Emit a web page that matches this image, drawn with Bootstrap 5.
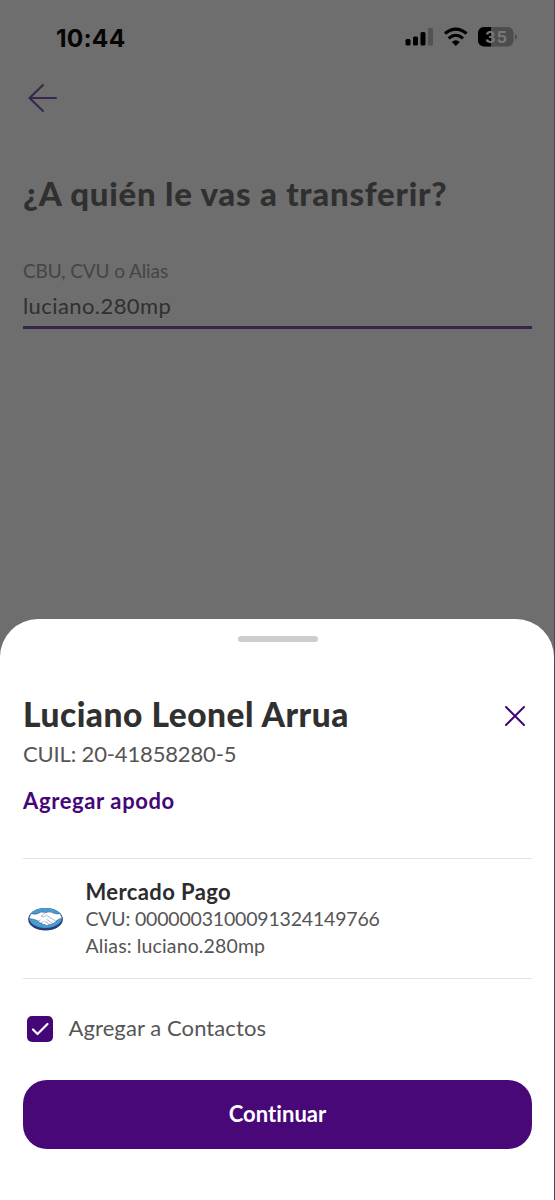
<!DOCTYPE html>
<html lang="es">
<head>
<meta charset="utf-8">
<meta name="viewport" content="width=device-width, initial-scale=1">
<title>Transferir</title>
<link href="https://cdn.jsdelivr.net/npm/bootstrap@5.3.0/dist/css/bootstrap.min.css" rel="stylesheet">
<style>
body{font-family:Lato,"Open Sans",sans-serif;background:#6e6e6e;height:1200px;overflow:hidden;color:#555;font-variant-ligatures:none}
.screen{height:1200px;border-right:1px solid #4d4d4d}
.line{white-space:nowrap;display:block;margin:0}
.statusbar{height:74px;padding:0 37px 0 56px}
.clock{font:700 24.5px/74px Inter,sans-serif;color:#050505;letter-spacing:.2px;padding-top:1px}
.back{margin:9px 0 0 28px;height:30px}
.form-area{padding:0 22px 0 23px}
.question{font-size:33px;line-height:40px;font-weight:900;color:#303030;margin-top:60px;letter-spacing:.75px}
.field-label{font-size:19px;line-height:24px;color:#454545;margin-top:46px;letter-spacing:-.1px}
.field-value{font-size:22px;line-height:28px;color:#303030;margin-top:9px;height:37px;border-bottom:3px solid #372549;letter-spacing:.42px}
.sheet{height:581px;border-radius:38px 38px 0 0;padding:17px 22px 0 23px}
.handle{width:80px;height:6px;background:#cdcdcd}
.heading{margin-top:52px}
.close-icon{margin:4px 6px 0 0}
.person{font-size:33.5px;line-height:40px;font-weight:900;color:#303030;letter-spacing:.52px}
.cuil{font-size:22px;line-height:28px;margin-top:6px;letter-spacing:-.15px}
.nick{font-size:22px;line-height:28px;font-weight:700;color:#450678;margin-top:19px;text-decoration:none;letter-spacing:.62px}
.account{margin-top:43px;height:121px;border-top:1px solid #e2e2e2;border-bottom:1px solid #e2e2e2;padding:19px 0 0 5px}
.bank-logo{margin:29px 21.5px 0 0}
.bank{font-size:22px;line-height:28px;font-weight:700;color:#2c2c2c;letter-spacing:.4px}
.detail{font-size:19.5px;line-height:26.5px}
.cvu{letter-spacing:-.19px}
.alias{letter-spacing:.13px}
.contact{margin-top:37px;padding-left:4px;height:26px;gap:15.5px}
.contact-label{font-size:22px;letter-spacing:.09px;line-height:26px;margin-top:-2px}
.box{width:26px;height:26px;border-radius:5px;background:#450678}
.go{height:69px;margin-top:38px;border-radius:24px;background:#490878;color:#fff;font-size:22px;font-weight:700;line-height:30px;letter-spacing:.05px;padding:0 0 2px}
</style>
</head>
<body>
<div class="screen d-flex flex-column justify-content-between">
  <main>
    <div class="statusbar d-flex justify-content-between align-items-center">
      <span class="clock">10:44</span>
      <svg width="113" height="24" viewBox="404 25 113 24">
        <rect x="405.5" y="39" width="5" height="6.5" rx="1.5"/><rect x="413" y="36.500" width="5" height="9" rx="1.500"/><rect x="420.500" y="32" width="5" height="13.500" rx="1.500"/><rect x="428" y="28" width="5" height="17.500" rx="1.500" fill="#525252"/>
        <path d="M445 33.600Q455.800 24.800 466.600 33.600" fill="none" stroke="#000" stroke-width="3.200"/>
        <path d="M448.600 38.300Q455.800 32.300 463 38.300" fill="none" stroke="#000" stroke-width="3"/>
        <path d="M451.800 42Q455.800 38.600 459.800 42L455.800 46Z"/>
        <clipPath id="cell"><rect x="478" y="27" width="35.500" height="19.500" rx="6"/></clipPath>
        <g clip-path="url(#cell)"><rect x="478" y="27" width="36" height="20" fill="#4d4d4d"/><rect x="478" y="27" width="13" height="20"/></g>
        <path d="M515 34q2 .6 2 2.700t-2 2.700z" fill="#4d4d4d"/>
        <text x="496" y="42.700" text-anchor="middle" font-family="Inter,sans-serif" font-weight="700" font-size="16.500" textLength="22" fill="#777">35</text>
      </svg>
    </div>
    <svg class="back d-block" width="30" height="30" viewBox="28 83 30 30" fill="none" stroke="#39264a" stroke-width="2" stroke-linecap="round" stroke-linejoin="round"><path d="M43 85 29.500 98 43 111M29.500 98H56"/></svg>
    <div class="form-area">
      <h1 class="line question">¿A quién le vas a transferir?</h1>
      <label class="line field-label">CBU, CVU o Alias</label>
      <div class="line field-value">luciano.280mp</div>
    </div>
  </main>
  <section class="sheet bg-white">
    <div class="handle rounded-pill mx-auto"></div>
    <div class="heading d-flex justify-content-between align-items-center">
      <h2 class="line person">Luciano Leonel Arrua</h2>
      <svg class="close-icon" width="22" height="22" viewBox="0 0 22 22" stroke="#450678" stroke-width="2" stroke-linecap="round"><path d="m2 2 18 18M20 2 2 20"/></svg>
    </div>
    <div class="line cuil">CUIL: 20-41858280-5</div>
    <a class="line nick">Agregar apodo</a>
    <div class="account d-flex">
      <svg class="bank-logo" width="36" height="24" viewBox="0 0 36 24">
        <ellipse cx="17.500" cy="12.300" rx="17.300" ry="11.300" fill="#273c78"/>
        <ellipse cx="17.500" cy="11" rx="16.400" ry="9.900" fill="#459dd3"/>
        <path d="M3 6.600Q8 8.500 12.500 5.300Q15 4.700 17.500 5.600Q22 3.800 25.500 6.100Q29 7.600 32 6.500L34 11Q30 12.200 27.800 14.300Q27.500 16.800 24.700 16.300Q23.500 18.300 21.200 17.400Q18.500 19.800 16.700 17.600Q14 18.300 13.500 16Q11 16.500 10.500 14.200Q6.500 12 1 11.500Z" fill="#fff" stroke="#36548b" stroke-width=".6"/>
        <path d="M17.500 5.700 13 9.100Q14.500 11 18.500 8.300L27.500 14M18.500 12.200l5.500 3.900M16.500 14l4.200 3M10.500 14.200l2-1.300M13.500 16l2-1.500" fill="none" stroke="#7088ad" stroke-width=".6"/>
      </svg>
      <div>
        <div class="line bank">Mercado Pago</div>
        <div class="line detail cvu">CVU: 0000003100091324149766</div>
        <div class="line detail alias">Alias: luciano.280mp</div>
      </div>
    </div>
    <div class="contact d-flex align-items-center">
      <span class="box d-flex align-items-center justify-content-center"><svg width="20" height="16" viewBox="0 0 20 16" fill="none" stroke="#fff" stroke-width="2.200" stroke-linecap="round" stroke-linejoin="round"><path d="m3 8.500 4.500 4.500L17.500 3"/></svg></span>
      <span class="line contact-label">Agregar a Contactos</span>
    </div>
    <button class="btn go w-100 border-0 d-block">Continuar</button>
  </section>
</div>
<script src="https://cdn.jsdelivr.net/npm/bootstrap@5.3.0/dist/js/bootstrap.bundle.min.js"></script>
</body>
</html>
